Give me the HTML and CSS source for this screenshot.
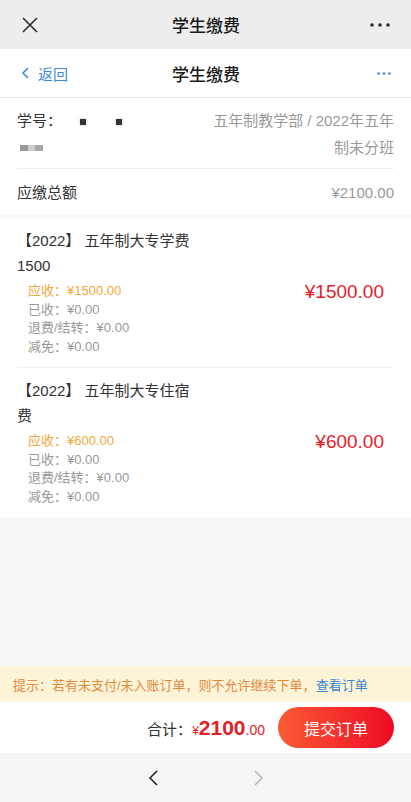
FILE: index.html
```html
<!DOCTYPE html>
<html lang="zh-CN">
<head>
    <meta charset="UTF-8">
    <meta name="viewport" content="width=device-width, initial-scale=1.0">
    <title>学生缴费</title>
    <link rel="stylesheet" href="styles.css">
</head>
<body>
    <!-- Barra del navegador interno -->
    <div class="wx-bar">
        <span class="bar-left">
            <svg width="16" height="16" viewBox="0 0 16 16"><path d="M1 1L15 15M15 1L1 15" stroke="#2b2b2b" stroke-width="1.6" fill="none"/></svg>
        </span>
        <span class="bar-title">学生缴费</span>
        <span class="bar-right">
            <svg width="20" height="4" viewBox="0 0 20 4"><circle cx="2" cy="2" r="1.8" fill="#2b2b2b"/><circle cx="10" cy="2" r="1.8" fill="#2b2b2b"/><circle cx="18" cy="2" r="1.8" fill="#2b2b2b"/></svg>
        </span>
    </div>

    <!-- Encabezado de la página -->
    <div class="nav">
        <a href="#" class="back">
            <svg width="8" height="12" viewBox="0 0 8 12"><path d="M7 1L2 6L7 11" stroke="#3d8bd8" stroke-width="1.6" fill="none"/></svg>
            返回
        </a>
        <span class="bar-title">学生缴费</span>
        <span class="bar-right">
            <svg width="14" height="3" viewBox="0 0 14 3"><circle cx="1.5" cy="1.5" r="1.3" fill="#3d8bd8"/><circle cx="7" cy="1.5" r="1.3" fill="#3d8bd8"/><circle cx="12.5" cy="1.5" r="1.3" fill="#3d8bd8"/></svg>
        </span>
    </div>

    <div class="content">
        <div class="card info">
            <div class="info-row">
                <div class="student">
                    学号：<span class="mask dark"></span><span class="mask dark gap"></span>
                    <div class="mask-line"><span class="mask g1"></span><span class="mask g2"></span><span class="mask g3"></span></div>
                </div>
                <div class="dept">五年制教学部 / 2022年五年制未分班</div>
            </div>
            <div class="info-row total">
                <span>应缴总额</span>
                <span class="muted">¥2100.00</span>
            </div>
        </div>

        <div class="card items">
            <div class="item">
                <div class="item-title">【2022】 五年制大专学费1500</div>
                <div class="item-body">
                    <div class="details">
                        <div class="due">应收：¥1500.00</div>
                        <div>已收：¥0.00</div>
                        <div>退费/结转：¥0.00</div>
                        <div>减免：¥0.00</div>
                    </div>
                    <div class="price">¥1500.00</div>
                </div>
            </div>
            <div class="item">
                <div class="item-title">【2022】 五年制大专住宿费</div>
                <div class="item-body">
                    <div class="details">
                        <div class="due">应收：¥600.00</div>
                        <div>已收：¥0.00</div>
                        <div>退费/结转：¥0.00</div>
                        <div>减免：¥0.00</div>
                    </div>
                    <div class="price">¥600.00</div>
                </div>
            </div>
        </div>
    </div>

    <div class="tip">提示：若有未支付/未入账订单，则不允许继续下单，<a href="#">查看订单</a></div>

    <div class="submit-bar">
        <div class="sum">合计：<span class="money"><small>¥</small><b>2100</b>.00</span></div>
        <button class="submit">提交订单</button>
    </div>

    <div class="browser-nav">
        <svg width="10" height="16" viewBox="0 0 10 16"><path d="M9 1L2 8L9 15" stroke="#1e1e1e" stroke-width="1.5" fill="none"/></svg>
        <svg width="10" height="16" viewBox="0 0 10 16"><path d="M1 1L8 8L1 15" stroke="#b4b4b4" stroke-width="1.5" fill="none"/></svg>
    </div>
</body>
</html>
```

FILE: styles.css
```css
body {
    font-family: "Liberation Sans", "Noto Sans CJK SC", sans-serif;
    margin: 0;
    height: 100vh;
    display: flex;
    flex-direction: column;
    background-color: #f7f7f8;
    color: #333;
}
.wx-bar, .nav {
    display: grid;
    grid-template-columns: 1fr auto 1fr;
    align-items: center;
    flex-shrink: 0;
}
.wx-bar {
    height: 49px;
    background-color: #ededed;
    padding: 0 21px 0 22px;
}
.wx-bar .bar-left svg {
    display: block;
}
.bar-title {
    font-size: 17px;
    font-weight: 500;
    color: #1a1a1a;
}
.bar-right {
    display: flex;
    justify-content: flex-end;
}
.bar-right svg {
    display: block;
}
.nav {
    height: 48px;
    background-color: #fff;
    border-bottom: 1px solid #e8e8e8;
    padding: 0 20px 0 21px;
}
.back {
    display: flex;
    align-items: center;
    gap: 9px;
    color: #3d8bd8;
    text-decoration: none;
    font-size: 15px;
}
.content {
    flex-grow: 1;
}
.card {
    background-color: #fff;
}
.info {
    margin-bottom: 3px;
}
.info-row {
    display: flex;
    justify-content: space-between;
    margin: 0 17px;
    font-size: 15px;
    line-height: 27px;
}
.info-row:first-child {
    padding: 9px 0 7px;
    border-bottom: 1px solid #efefef;
}
.info-row.total {
    height: 46px;
    align-items: center;
}
.muted {
    color: #999;
}
.dept {
    color: #999;
    text-align: right;
    width: 184px;
}
.mask {
    display: inline-block;
    width: 6px;
    height: 6px;
    vertical-align: middle;
}
.mask.dark {
    background-color: #333;
    margin-left: 18px;
    box-shadow: 0 0 3px #bbb;
}
.mask.dark.gap {
    margin-left: 30px;
}
.mask-line {
    display: flex;
    align-items: center;
    height: 27px;
    padding-left: 3px;
}
.mask.g1 { background-color: #9a9a9a; width: 8px; }
.mask.g2 { background-color: #cfcfcf; width: 7px; }
.mask.g3 { background-color: #a8a8a8; width: 8px; }
.item {
    margin: 0 17px;
    padding: 10px 0 11px;
    border-bottom: 1px solid #f2f2f2;
}
.item:last-child {
    border-bottom: none;
}
.item-title {
    width: 180px;
    font-size: 15px;
    line-height: 25px;
    color: #333;
}
.item-body {
    display: flex;
    justify-content: space-between;
    align-items: flex-start;
    margin-top: 4px;
    padding: 0 10px 0 11px;
}
.details {
    font-size: 13px;
    line-height: 18.5px;
    color: #999;
}
.details .due {
    color: #f0a73c;
}
.price {
    font-size: 19px;
    line-height: 19px;
    color: #e4202b;
}
.tip {
    height: 36px;
    display: flex;
    align-items: center;
    padding-left: 13px;
    background-color: #fdf4d7;
    color: #e38a3d;
    font-size: 13px;
    flex-shrink: 0;
}
.tip a {
    color: #3b86d0;
    text-decoration: none;
}
.submit-bar {
    height: 51px;
    display: flex;
    align-items: center;
    justify-content: flex-end;
    padding-right: 17px;
    background-color: #fff;
    flex-shrink: 0;
}
.sum {
    font-size: 15px;
    color: #333;
    margin-right: 13px;
}
.money {
    color: #e4202b;
    font-size: 14px;
}
.money small {
    font-size: 12px;
}
.money b {
    font-size: 21px;
}
.submit {
    width: 116px;
    height: 41px;
    border: none;
    border-radius: 21px;
    background: linear-gradient(to right, #fb5b34, #ee0a24);
    color: #fff;
    font-family: inherit;
    font-size: 16px;
    cursor: pointer;
}
.browser-nav {
    height: 49px;
    display: flex;
    align-items: center;
    justify-content: center;
    gap: 96px;
    background-color: #f5f5f5;
    flex-shrink: 0;
}
.browser-nav svg {
    display: block;
}
```
